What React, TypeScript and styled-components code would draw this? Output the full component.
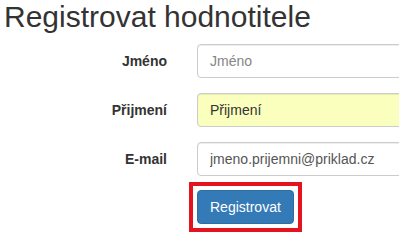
import styled, { createGlobalStyle } from "styled-components";

const GlobalStyle = createGlobalStyle`
  html, body {
    margin: 0;
    padding: 0;
    background: #fff;
    overflow: hidden;
  }
  body {
    font-family: "Liberation Sans", Arial, sans-serif;
    font-size: 14px;
    color: #333;
  }
`

const Page = styled.div`
  padding-left: 4px;
  width: 395px;
  overflow: hidden;
`

const Title = styled.h1`
  margin: 0;
  font-size: 30px;
  line-height: 33px;
  font-weight: normal;
  color: #333;
  white-space: nowrap;
`

const Form = styled.form`
  margin-top: 11px;
  display: flex;
  flex-direction: column;
  gap: 15px;
`

const Row = styled.div`
  display: grid;
  grid-template-columns: 163px 260px;
  column-gap: 30px;
  align-items: center;
`

const Label = styled.label`
  text-align: right;
  font-weight: bold;
  font-size: 14px;
  color: #333;
`

// autofilled fields get Chrome's pale yellow
const Input = styled.input<{ $autofill?: boolean }>`
  box-sizing: border-box;
  height: 34px;
  width: 100%;
  padding: 6px 12px;
  font-family: inherit;
  font-size: 14px;
  color: ${(p) => (p.$autofill ? "#333" : "#555")};
  background: ${(p) => (p.$autofill ? "rgb(250, 255, 189)" : "#fff")};
  border: 1px solid #ccc;
  border-radius: 4px;
  box-shadow: inset 0 1px 1px rgba(0, 0, 0, 0.075);
  outline: none;

  &::placeholder {
    color: #858585;
  }
`

const Actions = styled.div`
  margin-top: -9px;
  padding-left: 185px;
`

const Highlight = styled.div`
  display: inline-block;
  border: 4px solid #e3141f;
  padding: 4px;
`

const Button = styled.button`
  display: block;
  box-sizing: border-box;
  height: 34px;
  padding: 6px 12px;
  font-family: inherit;
  font-size: 14px;
  color: #fff;
  background: #337ab7;
  border: 1px solid #2e6da4;
  border-radius: 4px;
  cursor: pointer;
`

export default function App() {
  return (
    <Page>
      <GlobalStyle />
      <Title>Registrovat hodnotitele</Title>
      <Form onSubmit={(e) => e.preventDefault()}>
        <Row>
          <Label htmlFor="jmeno">Jméno</Label>
          <Input id="jmeno" placeholder="Jméno" />
        </Row>
        <Row>
          <Label htmlFor="prijmeni">Přijmení</Label>
          <Input id="prijmeni" $autofill defaultValue="Přijmení" />
        </Row>
        <Row>
          <Label htmlFor="email">E-mail</Label>
          <Input id="email" defaultValue="jmeno.prijemni@priklad.cz" />
        </Row>
        <Actions>
          <Highlight>
            <Button type="submit">Registrovat</Button>
          </Highlight>
        </Actions>
      </Form>
    </Page>
  );
}
